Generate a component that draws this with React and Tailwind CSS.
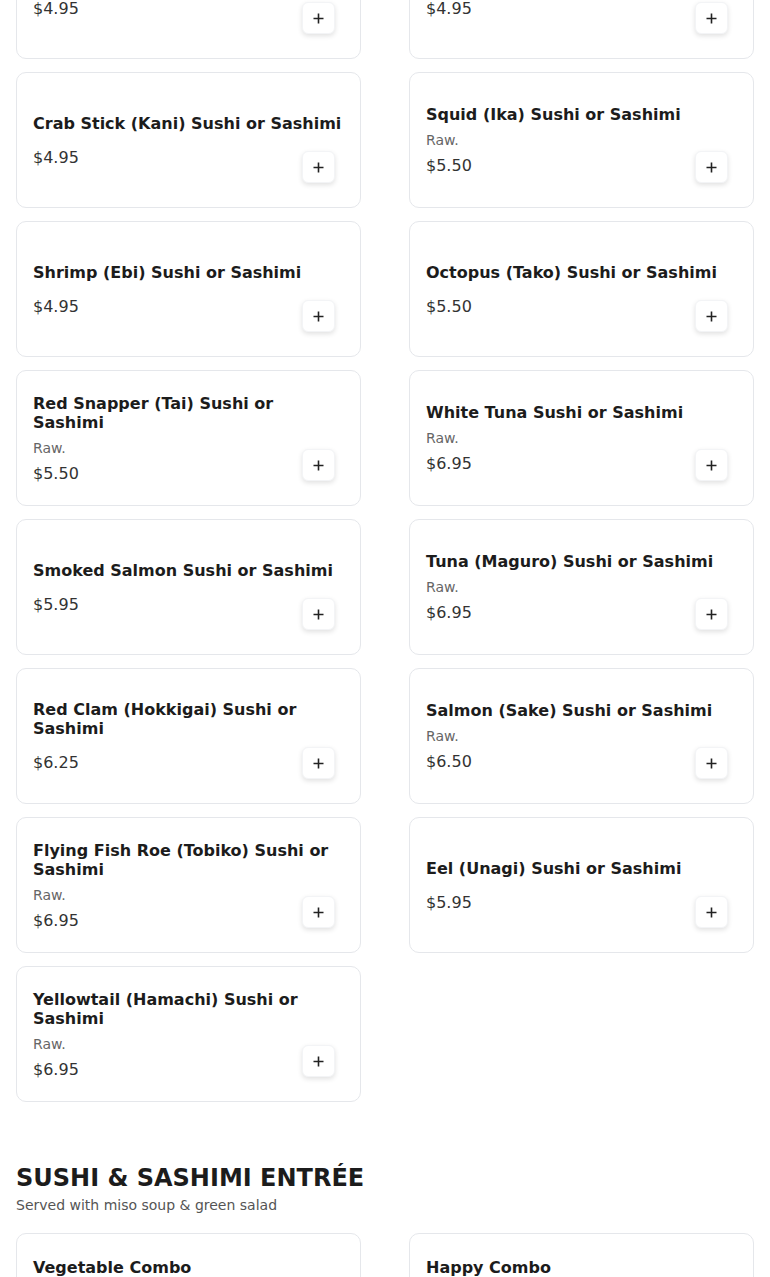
import React from "react";

const items = [
  { name: "Salmon Skin Sushi or Sashimi", price: "$4.95" },
  { name: "Mackerel (Saba) Sushi or Sashimi", price: "$4.95" },
  { name: "Crab Stick (Kani) Sushi or Sashimi", price: "$4.95" },
  { name: "Squid (Ika) Sushi or Sashimi", desc: "Raw.", price: "$5.50" },
  { name: "Shrimp (Ebi) Sushi or Sashimi", price: "$4.95" },
  { name: "Octopus (Tako) Sushi or Sashimi", price: "$5.50" },
  { name: "Red Snapper (Tai) Sushi or Sashimi", desc: "Raw.", price: "$5.50" },
  { name: "White Tuna Sushi or Sashimi", desc: "Raw.", price: "$6.95" },
  { name: "Smoked Salmon Sushi or Sashimi", price: "$5.95" },
  { name: "Tuna (Maguro) Sushi or Sashimi", desc: "Raw.", price: "$6.95" },
  { name: "Red Clam (Hokkigai) Sushi or Sashimi", price: "$6.25" },
  { name: "Salmon (Sake) Sushi or Sashimi", desc: "Raw.", price: "$6.50" },
  { name: "Flying Fish Roe (Tobiko) Sushi or Sashimi", desc: "Raw.", price: "$6.95" },
  { name: "Eel (Unagi) Sushi or Sashimi", price: "$5.95" },
  { name: "Yellowtail (Hamachi) Sushi or Sashimi", desc: "Raw.", price: "$6.95" },
];

const entrees = [
  { name: "Vegetable Combo", desc: "Cucumber roll, avocado roll and 6 pieces of vegetable sushi.", price: "$15.95" },
  { name: "Happy Combo", desc: "California roll, tuna roll and 5 pieces of chef's choice sushi.", price: "$19.95" },
];

function PlusButton() {
  return (
    <button className="absolute right-[25px] bottom-6 flex h-8 w-[33px] items-center justify-center rounded-md border border-gray-100 bg-white shadow-[0_2px_5px_rgba(0,0,0,0.12)]">
      <svg width="11" height="11" viewBox="0 0 11 11" fill="none">
        <path d="M5.5 0.5v10M0.5 5.5h10" stroke="#222" strokeWidth="1.6" />
      </svg>
    </button>
  );
}

function ItemCard({ item }) {
  return (
    <div className="relative flex h-[136px] flex-col justify-center rounded-[10px] border border-gray-200 bg-white px-4 pt-[3px]">
      <h3 className="text-base leading-[19px] font-bold text-[#1c1c1c]">{item.name}</h3>
      {item.desc && <p className="mt-[6px] text-sm leading-5 text-[#666]">{item.desc}</p>}
      <p className={`${item.desc ? "mt-1" : "mt-[13px]"} text-base leading-6 text-[#333]`}>{item.price}</p>
      <PlusButton />
    </div>
  );
}

function EntreeCard({ item }) {
  return (
    <div className="relative min-h-[136px] rounded-[10px] border border-gray-200 bg-white px-4 pt-6 pb-16">
      <h3 className="text-base leading-[19px] font-bold text-[#1c1c1c]">{item.name}</h3>
      <p className="mt-[6px] text-sm leading-5 text-[#666]">{item.desc}</p>
      <p className="mt-1 text-base leading-6 text-[#333]">{item.price}</p>
      <PlusButton />
    </div>
  );
}

export default function App() {
  return (
    <div className="h-[1277px] overflow-hidden bg-white px-4" style={{ fontFamily: '"DejaVu Sans", sans-serif' }}>
      <div className="-mt-[77px] grid grid-cols-2 gap-x-12 gap-y-[13px]">
        {items.map((item, i) => (
          <ItemCard key={i} item={item} />
        ))}
      </div>

      <div className="mt-[60px]">
        <h2 className="text-2xl leading-8 font-bold text-[#1c1c1c]">SUSHI &amp; SASHIMI ENTRÉE</h2>
        <p className="mt-[1px] text-sm leading-5 text-[#555]">Served with miso soup &amp; green salad</p>
      </div>

      <div className="mt-[18px] grid grid-cols-2 gap-x-12 gap-y-[13px]">
        {entrees.map((item, i) => (
          <EntreeCard key={i} item={item} />
        ))}
      </div>
    </div>
  );
}
